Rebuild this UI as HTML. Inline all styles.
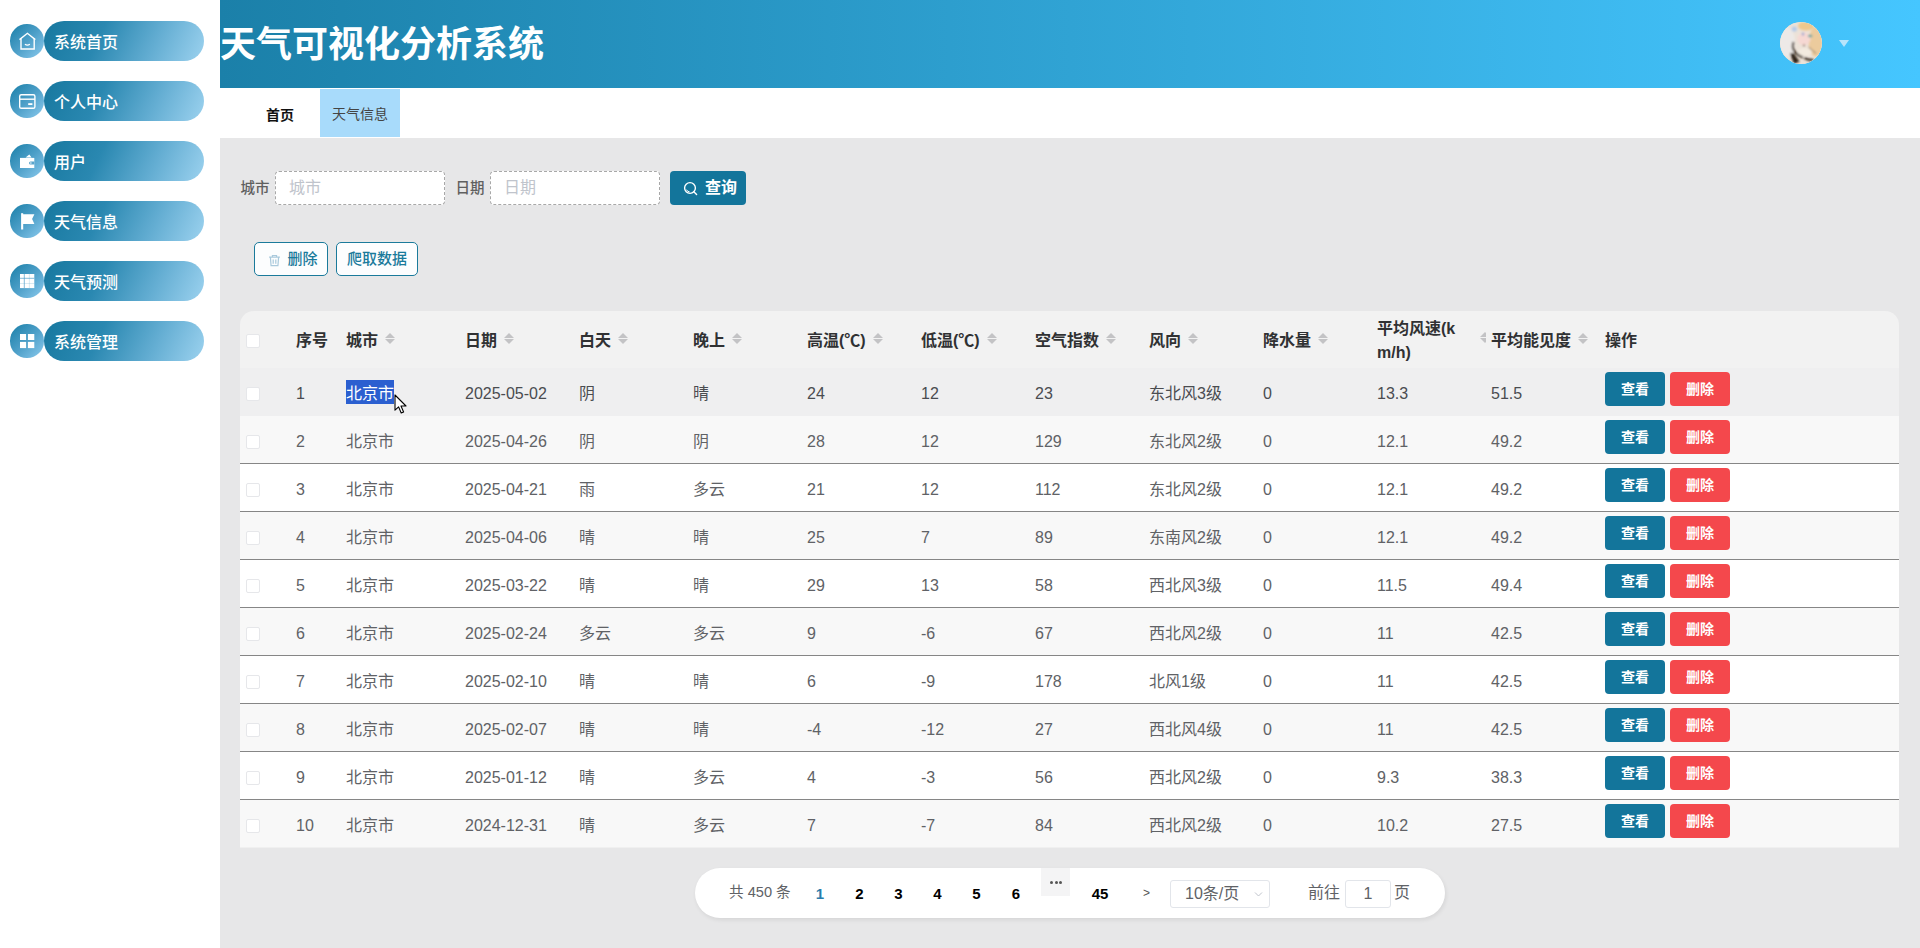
<!DOCTYPE html><html lang="zh-CN"><head><meta charset="utf-8"><title>天气可视化分析系统</title><style>
*{box-sizing:border-box;margin:0;padding:0}
html,body{width:1920px;height:948px;overflow:hidden;background:#e7e7e8}
body{font-family:"Liberation Sans","Noto Sans CJK SC",sans-serif;font-size:14px;color:#606266;position:relative}
.side{position:absolute;left:0;top:0;width:220px;height:948px;background:#fff}
.mi{position:absolute;left:0;width:220px;height:40px}
.mi .ic{position:absolute;left:10px;top:3px;width:33.5px;height:33.5px;border-radius:50%;background:linear-gradient(135deg,#2385ae 10%,#4d9fc8 50%,#85c6ea 95%)}.mi .ic svg{position:absolute;left:0;top:0}
.mi .pill{position:absolute;left:44px;top:0;width:160px;height:40px;border-radius:20px;background:linear-gradient(115deg,#17789f 0%,#2a88b1 35%,#63add2 68%,#9cd2ef 100%);color:#fff;font-size:16px;line-height:43px;padding-left:10px;font-weight:500}
.head{position:absolute;left:220px;top:0;width:1700px;height:88px;background:linear-gradient(90deg,#1b80a9 0%,#45c6ff 100%)}
.head h1{position:absolute;left:0px;top:0;line-height:89px;font-size:36px;font-weight:bold;color:#fff;white-space:nowrap;letter-spacing:0}
.avatar{position:absolute;left:1560px;top:22px;width:42px;height:42px;border-radius:50%;overflow:hidden;background:#f1e3d0}
.tri{position:absolute;left:1619px;top:40px;width:0;height:0;border-left:5px solid transparent;border-right:5px solid transparent;border-top:7px solid #b8e4fb}
.tabs{position:absolute;left:220px;top:88px;width:1700px;height:50px;background:#fff}
.tabs .t1{position:absolute;left:46px;top:1px;line-height:52px;font-weight:bold;color:#111;font-size:14px}
.tabs .t2{position:absolute;left:100px;top:1px;width:80px;height:48px;background:#a8dbfb;color:#444;text-align:center;line-height:51px;font-size:14px}
.lbl{position:absolute;top:171px;line-height:34px;font-size:14.5px;color:#606060;font-weight:500;margin-left:-0.5px}
.inp{position:absolute;top:171px;width:170px;height:34px;border:1px dashed #a8a8a8;border-radius:4px;background:#fff;color:#c0c4cc;font-size:16px;line-height:32px;padding-left:13px}
.qbtn{position:absolute;left:670px;top:171px;width:76px;height:34px;border-radius:4px;background:#13759b;color:#fff;font-weight:bold;font-size:16px;line-height:33px}
.qbtn svg{position:absolute;left:12.5px;top:10px}
.qbtn span{position:absolute;left:35px;top:0}
.obtn{position:absolute;top:242px;height:34px;border:1px solid #1a7a9b;border-radius:5px;background:#fcfdfe;color:#1a7a9b;font-size:15px;line-height:32px;font-weight:500}
table{position:absolute;left:240px;top:311px;width:1659px;border-collapse:separate;border-spacing:0;table-layout:fixed;font-size:16px}
thead th{height:57px;background:#f2f2f2;color:#303133;font-weight:bold;text-align:left;padding:0 0 0 10px;vertical-align:middle;white-space:nowrap;position:relative;line-height:24px;padding-top:2px}
thead th:first-child{border-top-left-radius:14px}
thead th:last-child{border-top-right-radius:14px}
tbody td{height:48px;padding:0 0 0 10px;vertical-align:middle;white-space:nowrap;color:#606266;background:#fff;border-bottom:1px solid #868686;line-height:23px;padding-top:4px}
tbody tr:nth-child(even) td{background:#f8f8f8}
tbody tr.hov td{background:#efeff0;border-bottom-color:#efeff0;color:#4a4c50}
tbody tr:last-child td{border-bottom-color:#f0f0f0}
.cb{display:block;width:14px;height:14px;border:1px solid #e6e7ea;background:#fff;border-radius:2px;margin-left:-4px;margin-top:0px}
.sort{display:inline-block;position:relative;top:2px;width:24px;height:24px;vertical-align:middle;margin-top:-4px}
.sort:before,.sort:after{content:"";position:absolute;left:7px;border:5px solid transparent}
.sort:before{top:-1px;border-bottom-color:#c3c3c5}
.sort:after{top:10px;border-top-color:#c3c3c5}
.b{display:inline-block;width:60px;height:34px;border-radius:4px;color:#fff;font-size:14px;font-weight:bold;text-align:center;line-height:34px;vertical-align:top;margin-top:-9px}
.b1{background:#13759b;margin-right:5px}
.b2{background:#f4484c}
.sel{position:relative;color:#fff;z-index:0}.sel:before{content:'';position:absolute;left:0;right:0;top:-5px;height:24px;background:#2b5fd0;z-index:-1}
.pg{position:absolute;left:695px;top:868px;width:750px;height:50px;border-radius:25px;background:#fff;box-shadow:1px 2px 4px rgba(0,0,0,.08)}
.pg span{position:absolute;white-space:nowrap}
.pg .tot{top:0;line-height:49px;font-size:14.6px;color:#606266}
.pg .num{top:0;width:30px;text-align:center;line-height:52px;font-size:15px;font-weight:bold;color:#000}
.pg .num.act{color:#2a7cab}
.pg .more{left:346px;top:0;width:29px;height:28px;background:#f4f4f5}
.pg .more i{position:absolute;top:13px;width:3px;height:3px;border-radius:50%;background:#555}
.pg .more i:nth-child(1){left:9px}.pg .more i:nth-child(2){left:13.5px}.pg .more i:nth-child(3){left:18px}
.pg .nxt{top:0;line-height:49px;font-size:12px;color:#555}
.pg .box{top:12px;height:28px;border:1px solid #e2e5ea;border-radius:3px;line-height:25px;font-size:16px;color:#606266;background:#fff}
.pg .txt{top:0;line-height:49px;font-size:16px;color:#606266}
</style></head><body>
<div class="side">
<div class="mi" style="top:21px"><div class="ic"><svg viewBox="0 0 34 34" width="34" height="34"><path d="M9.5 15.6 L17.4 9.3 L25.3 15.6" fill="none" stroke="#fff" stroke-width="1.4" stroke-linejoin="miter"/><path d="M11 14.6 V25 H24.2 V14.6" fill="none" stroke="#fff" stroke-width="1.4"/><path d="M14.9 20.3 Q17.4 21.9 19.9 20.3" stroke="#fff" stroke-width="1.3" fill="none"/></svg></div><div class="pill">系统首页</div></div>
<div class="mi" style="top:81px"><div class="ic"><svg viewBox="0 0 34 34" width="34" height="34"><rect x="9.7" y="10.7" width="15.2" height="13.6" rx="1.6" fill="none" stroke="#fff" stroke-width="1.4"/><path d="M9.7 15.2 H24.9" stroke="#fff" stroke-width="1.4"/><rect x="18.2" y="19.2" width="4.2" height="1.8" fill="#fff"/></svg></div><div class="pill">个人中心</div></div>
<div class="mi" style="top:141px"><div class="ic"><svg viewBox="0 0 34 34" width="34" height="34"><path d="M10 13.9 H24.3 V24 H10 Z" fill="#fff"/><path d="M15.6 13.5 L19.3 10.6 L21.6 13.5 Z" fill="#fff"/><path d="M24.3 17.4 H20.6 A1.6 1.6 0 0 0 20.6 20.6 H24.3 Z" fill="#5aa5cc"/><circle cx="20.9" cy="19" r="0.75" fill="#fff"/></svg></div><div class="pill">用户</div></div>
<div class="mi" style="top:201px"><div class="ic"><svg viewBox="0 0 34 34" width="34" height="34"><path d="M11.1 9.2 H13.2 V25.5 H11.1 Z" fill="#fff"/><path d="M13 10.2 H24.4 L22.1 15 L24.4 19.9 H13 Z" fill="#fff"/></svg></div><div class="pill">天气信息</div></div>
<div class="mi" style="top:261px"><div class="ic"><svg viewBox="0 0 34 34" width="34" height="34"><rect x="10" y="10" width="14.3" height="14.1" fill="#fff"/><g stroke="#4f9fc8"><path d="M14.3 10 V24.1 M10 14.3 H24.3" stroke-width="0.7"/><path d="M19.4 10 V24.1 M10 19.5 H24.3" stroke-width="0.5" stroke-opacity="0.45"/></g></svg></div><div class="pill">天气预测</div></div>
<div class="mi" style="top:321px"><div class="ic"><svg viewBox="0 0 34 34" width="34" height="34"><g fill="#fff"><rect x="10" y="10" width="6.1" height="6"/><rect x="17.9" y="10" width="6.4" height="6"/><rect x="10" y="17.9" width="6.1" height="6.2"/><rect x="17.9" y="17.9" width="6.4" height="6.2"/></g></svg></div><div class="pill">系统管理</div></div>
</div>
<div class="head"><h1>天气可视化分析系统</h1><div class="avatar"><svg width="42" height="42" viewBox="0 0 42 42"><defs><filter id="bl" x="-10%" y="-10%" width="120%" height="120%"><feGaussianBlur stdDeviation="0.9"/></filter><clipPath id="cc"><circle cx="21" cy="21" r="21"/></clipPath></defs><g clip-path="url(#cc)"><rect width="42" height="42" fill="#ece2d8"/><g filter="url(#bl)"><ellipse cx="7" cy="20" rx="8" ry="15" fill="#ede9e7"/><ellipse cx="36" cy="20" rx="7.5" ry="15" fill="#eccb9d"/><ellipse cx="26" cy="4" rx="8" ry="4.5" fill="#efc88c"/><circle cx="14.3" cy="7" r="2.6" fill="#b5cbea"/><circle cx="24" cy="17" r="6.5" fill="#f6d8d3"/><ellipse cx="30.2" cy="14" rx="2.3" ry="1.2" fill="#5fa3a1"/><ellipse cx="23" cy="12" rx="1.2" ry="1.6" fill="#8f9fd0"/><path d="M13.5 20 Q11.5 26 15 30 T23 35.5" fill="none" stroke="#3b2e22" stroke-width="2"/><path d="M10 31.5 L13.5 31 L19.5 39.5 L14 42 Z" fill="#2e2218"/><path d="M24.5 35.8 Q29 39 33.5 37.6" fill="none" stroke="#3b2e22" stroke-width="2.3"/><path d="M28.5 25 L36 31.5" stroke="#7a6754" stroke-width="1"/><circle cx="24" cy="23.4" r="0.9" fill="#5a4030"/><ellipse cx="25" cy="30" rx="7" ry="4" fill="#f3eadf"/></g></g></svg></div><div class="tri"></div></div>
<div class="tabs"><div class="t1">首页</div><div class="t2">天气信息</div></div>
<div class="lbl" style="left:241px">城市</div><div class="inp" style="left:275px">城市</div>
<div class="lbl" style="left:456px">日期</div><div class="inp" style="left:490px">日期</div>
<div class="qbtn"><svg width="15" height="15" viewBox="0 0 15 15"><circle cx="7" cy="7" r="5.4" fill="none" stroke="#fff" stroke-width="1.4"/><path d="M10.8 10.8 L13.6 13.6" stroke="#fff" stroke-width="1.4" stroke-linecap="round"/><path d="M3.4 8.6 A4 4 0 0 0 6.6 10.9" stroke="#fff" stroke-width="1" fill="none"/></svg><span>查询</span></div>
<div class="obtn" style="left:254px;width:74px"><svg style="position:absolute;left:12.5px;top:10.5px" width="13" height="13" viewBox="0 0 14 14"><path d="M1.2 3.4 H12.8 M4.8 3.2 V1.6 H9.2 V3.2 M2.6 3.6 L3.3 12.6 H10.7 L11.4 3.6 M5.6 6 V10.4 M8.4 6 V10.4" fill="none" stroke="#a9c9dc" stroke-width="1.3"/></svg><span style="position:absolute;left:32.5px">删除</span></div>
<div class="obtn" style="left:336px;width:82px;text-align:center">爬取数据</div>
<table><colgroup><col style="width:46px"><col style="width:50px"><col style="width:119px"><col style="width:114px"><col style="width:114px"><col style="width:114px"><col style="width:114px"><col style="width:114px"><col style="width:114px"><col style="width:114px"><col style="width:114px"><col style="width:114px"><col style="width:114px"><col style="width:304px"></colgroup>
<thead><tr><th><i class="cb"></i></th>
<th>序号</th>
<th>城市<i class="sort"></i></th>
<th>日期<i class="sort"></i></th>
<th>白天<i class="sort"></i></th>
<th>晚上<i class="sort"></i></th>
<th>高温(℃)<i class="sort"></i></th>
<th>低温(℃)<i class="sort"></i></th>
<th>空气指数<i class="sort"></i></th>
<th>风向<i class="sort"></i></th>
<th>降水量<i class="sort"></i></th>
<th style="white-space:normal"><div style="width:86px;word-break:break-all">平均风速(km/h)</div><div style="position:absolute;z-index:2;left:106px;top:17px;width:13px;height:24px;overflow:hidden"><i class="sort" style="margin:0;position:absolute;left:0;top:0"></i></div></th>
<th>平均能见度<i class="sort"></i></th>
<th>操作</th>
</tr></thead><tbody>
<tr class="hov"><td><i class="cb"></i></td>
<td>1</td>
<td><span class="sel">北京市</span></td>
<td>2025-05-02</td>
<td>阴</td>
<td>晴</td>
<td>24</td>
<td>12</td>
<td>23</td>
<td>东北风3级</td>
<td>0</td>
<td>13.3</td>
<td>51.5</td>
<td><span class="b b1">查看</span><span class="b b2">删除</span></td></tr>
<tr><td><i class="cb"></i></td>
<td>2</td>
<td>北京市</td>
<td>2025-04-26</td>
<td>阴</td>
<td>阴</td>
<td>28</td>
<td>12</td>
<td>129</td>
<td>东北风2级</td>
<td>0</td>
<td>12.1</td>
<td>49.2</td>
<td><span class="b b1">查看</span><span class="b b2">删除</span></td></tr>
<tr><td><i class="cb"></i></td>
<td>3</td>
<td>北京市</td>
<td>2025-04-21</td>
<td>雨</td>
<td>多云</td>
<td>21</td>
<td>12</td>
<td>112</td>
<td>东北风2级</td>
<td>0</td>
<td>12.1</td>
<td>49.2</td>
<td><span class="b b1">查看</span><span class="b b2">删除</span></td></tr>
<tr><td><i class="cb"></i></td>
<td>4</td>
<td>北京市</td>
<td>2025-04-06</td>
<td>晴</td>
<td>晴</td>
<td>25</td>
<td>7</td>
<td>89</td>
<td>东南风2级</td>
<td>0</td>
<td>12.1</td>
<td>49.2</td>
<td><span class="b b1">查看</span><span class="b b2">删除</span></td></tr>
<tr><td><i class="cb"></i></td>
<td>5</td>
<td>北京市</td>
<td>2025-03-22</td>
<td>晴</td>
<td>晴</td>
<td>29</td>
<td>13</td>
<td>58</td>
<td>西北风3级</td>
<td>0</td>
<td>11.5</td>
<td>49.4</td>
<td><span class="b b1">查看</span><span class="b b2">删除</span></td></tr>
<tr><td><i class="cb"></i></td>
<td>6</td>
<td>北京市</td>
<td>2025-02-24</td>
<td>多云</td>
<td>多云</td>
<td>9</td>
<td>-6</td>
<td>67</td>
<td>西北风2级</td>
<td>0</td>
<td>11</td>
<td>42.5</td>
<td><span class="b b1">查看</span><span class="b b2">删除</span></td></tr>
<tr><td><i class="cb"></i></td>
<td>7</td>
<td>北京市</td>
<td>2025-02-10</td>
<td>晴</td>
<td>晴</td>
<td>6</td>
<td>-9</td>
<td>178</td>
<td>北风1级</td>
<td>0</td>
<td>11</td>
<td>42.5</td>
<td><span class="b b1">查看</span><span class="b b2">删除</span></td></tr>
<tr><td><i class="cb"></i></td>
<td>8</td>
<td>北京市</td>
<td>2025-02-07</td>
<td>晴</td>
<td>晴</td>
<td>-4</td>
<td>-12</td>
<td>27</td>
<td>西北风4级</td>
<td>0</td>
<td>11</td>
<td>42.5</td>
<td><span class="b b1">查看</span><span class="b b2">删除</span></td></tr>
<tr><td><i class="cb"></i></td>
<td>9</td>
<td>北京市</td>
<td>2025-01-12</td>
<td>晴</td>
<td>多云</td>
<td>4</td>
<td>-3</td>
<td>56</td>
<td>西北风2级</td>
<td>0</td>
<td>9.3</td>
<td>38.3</td>
<td><span class="b b1">查看</span><span class="b b2">删除</span></td></tr>
<tr><td><i class="cb"></i></td>
<td>10</td>
<td>北京市</td>
<td>2024-12-31</td>
<td>晴</td>
<td>多云</td>
<td>7</td>
<td>-7</td>
<td>84</td>
<td>西北风2级</td>
<td>0</td>
<td>10.2</td>
<td>27.5</td>
<td><span class="b b1">查看</span><span class="b b2">删除</span></td></tr>
</tbody></table>
<div class="pg"><span class="tot" style="left:34px">共 450 条</span><span class="num act" style="left:110px">1</span><span class="num" style="left:149.5px">2</span><span class="num" style="left:188.5px">3</span><span class="num" style="left:227.5px">4</span><span class="num" style="left:266.5px">5</span><span class="num" style="left:306px">6</span><span class="more"><i></i><i></i><i></i></span><span class="num" style="left:390px">45</span><span class="nxt" style="left:448px;margin-top:0.5px">&gt;</span><span class="box" style="left:475px;width:100px;padding-left:14px">10条/页<svg style="position:absolute;left:83px;top:10px" width="9" height="7" viewBox="0 0 9 7"><path d="M1 1.5 L4.5 5 L8 1.5" fill="none" stroke="#c0c4cc" stroke-width="1"/></svg></span><span class="txt" style="left:613px">前往</span><span class="box" style="left:650px;width:46px;text-align:center">1</span><span class="txt" style="left:699px">页</span></div>
<svg style="position:absolute;left:394px;top:393.5px" width="14" height="21" viewBox="0 0 14 21"><path d="M1 1 V16.2 L4.6 12.9 L7.2 19 L9.6 18 L7 12 H12 Z" fill="#fff" stroke="#000" stroke-width="1.1" stroke-linejoin="round"/></svg>
</body></html>
